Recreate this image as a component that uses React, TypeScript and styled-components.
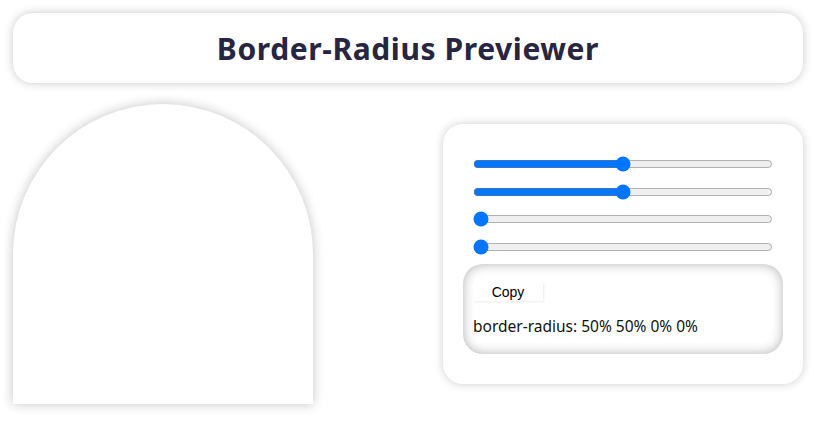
import React, { useState } from "react";
import styled, { createGlobalStyle } from "styled-components";

const Global = createGlobalStyle`
  html, body { margin: 0; padding: 0; background: #ffffff; }
  body { font-family: "Noto Sans", "Open Sans", sans-serif; }
`;

const Page = styled.div`
  padding: 13px;
  width: 790px;
  display: flex;
  flex-direction: column;
  gap: 20px;
`;

const Header = styled.header`
  height: 70px;
  border-radius: 20px;
  background: #fff;
  box-shadow: 0 0 10px rgba(0, 0, 0, 0.22);
  display: flex;
  align-items: center;
  justify-content: center;
`;

const Title = styled.h1`
  margin: 0;
  font-family: "Noto Sans", sans-serif;
  font-size: 30px;
  font-weight: 700;
  color: #27253f;
  letter-spacing: 0.6px;
`;

const Main = styled.main`
  display: flex;
  align-items: center;
  justify-content: space-between;
  padding-top: 1px;
`;

const Shape = styled.div`
  width: 300px;
  height: 300px;
  background: #fff;
  box-shadow: 0 0 12px rgba(0, 0, 0, 0.24);
`;

const Panel = styled.section`
  width: 360px;
  box-sizing: border-box;
  padding: 32px 20px 30px;
  border-radius: 20px;
  background: #fff;
  box-shadow: 0 0 10px rgba(0, 0, 0, 0.2);
  display: flex;
  flex-direction: column;
  align-items: center;
`;

const Sliders = styled.div`
  display: flex;
  flex-direction: column;
  gap: 11.7px;
  margin-bottom: 9px;
`;

const Range = styled.input`
  display: block;
  width: 300px;
  height: 16px;
  margin: 0;
`;

const Output = styled.div`
  width: 320px;
  height: 90px;
  box-sizing: border-box;
  padding: 19px 10px 0;
  border-radius: 20px;
  background: #fff;
  box-shadow: inset 0 0 12px rgba(0, 0, 0, 0.3);
  display: flex;
  flex-direction: column;
  gap: 14px;
`;

const CopyButton = styled.button`
  width: 70px;
  height: 18px;
  padding: 0;
  border: none;
  background: #fff;
  box-shadow: 1px 1px 2px rgba(0, 0, 0, 0.08);
  font-family: "Liberation Sans", Arial, sans-serif;
  font-size: 14px;
  color: #000;
`;

const Code = styled.p`
  margin: 0;
  font-family: "Noto Sans", sans-serif;
  font-size: 15.5px;
  color: #111;
`;

export default function App() {
  const [vals, setVals] = useState([50, 50, 0, 0]);
  const radius = vals.map((v) => `${v}%`).join(" ");
  return (
    <>
      <Global />
      <Page>
        <Header>
          <Title>Border-Radius Previewer</Title>
        </Header>
        <Main>
          <Shape style={{ borderRadius: radius }} />
          <Panel>
            <Sliders>
              {vals.map((v, i) => (
                <Range
                  key={i}
                  type="range"
                  min={0}
                  max={100}
                  value={v}
                  onChange={(e) => {
                    const n = [...vals];
                    n[i] = Number(e.target.value);
                    setVals(n);
                  }}
                />
              ))}
            </Sliders>
            <Output>
              <CopyButton>Copy</CopyButton>
              <Code>border-radius: {radius}</Code>
            </Output>
          </Panel>
        </Main>
      </Page>
    </>
  );
}
